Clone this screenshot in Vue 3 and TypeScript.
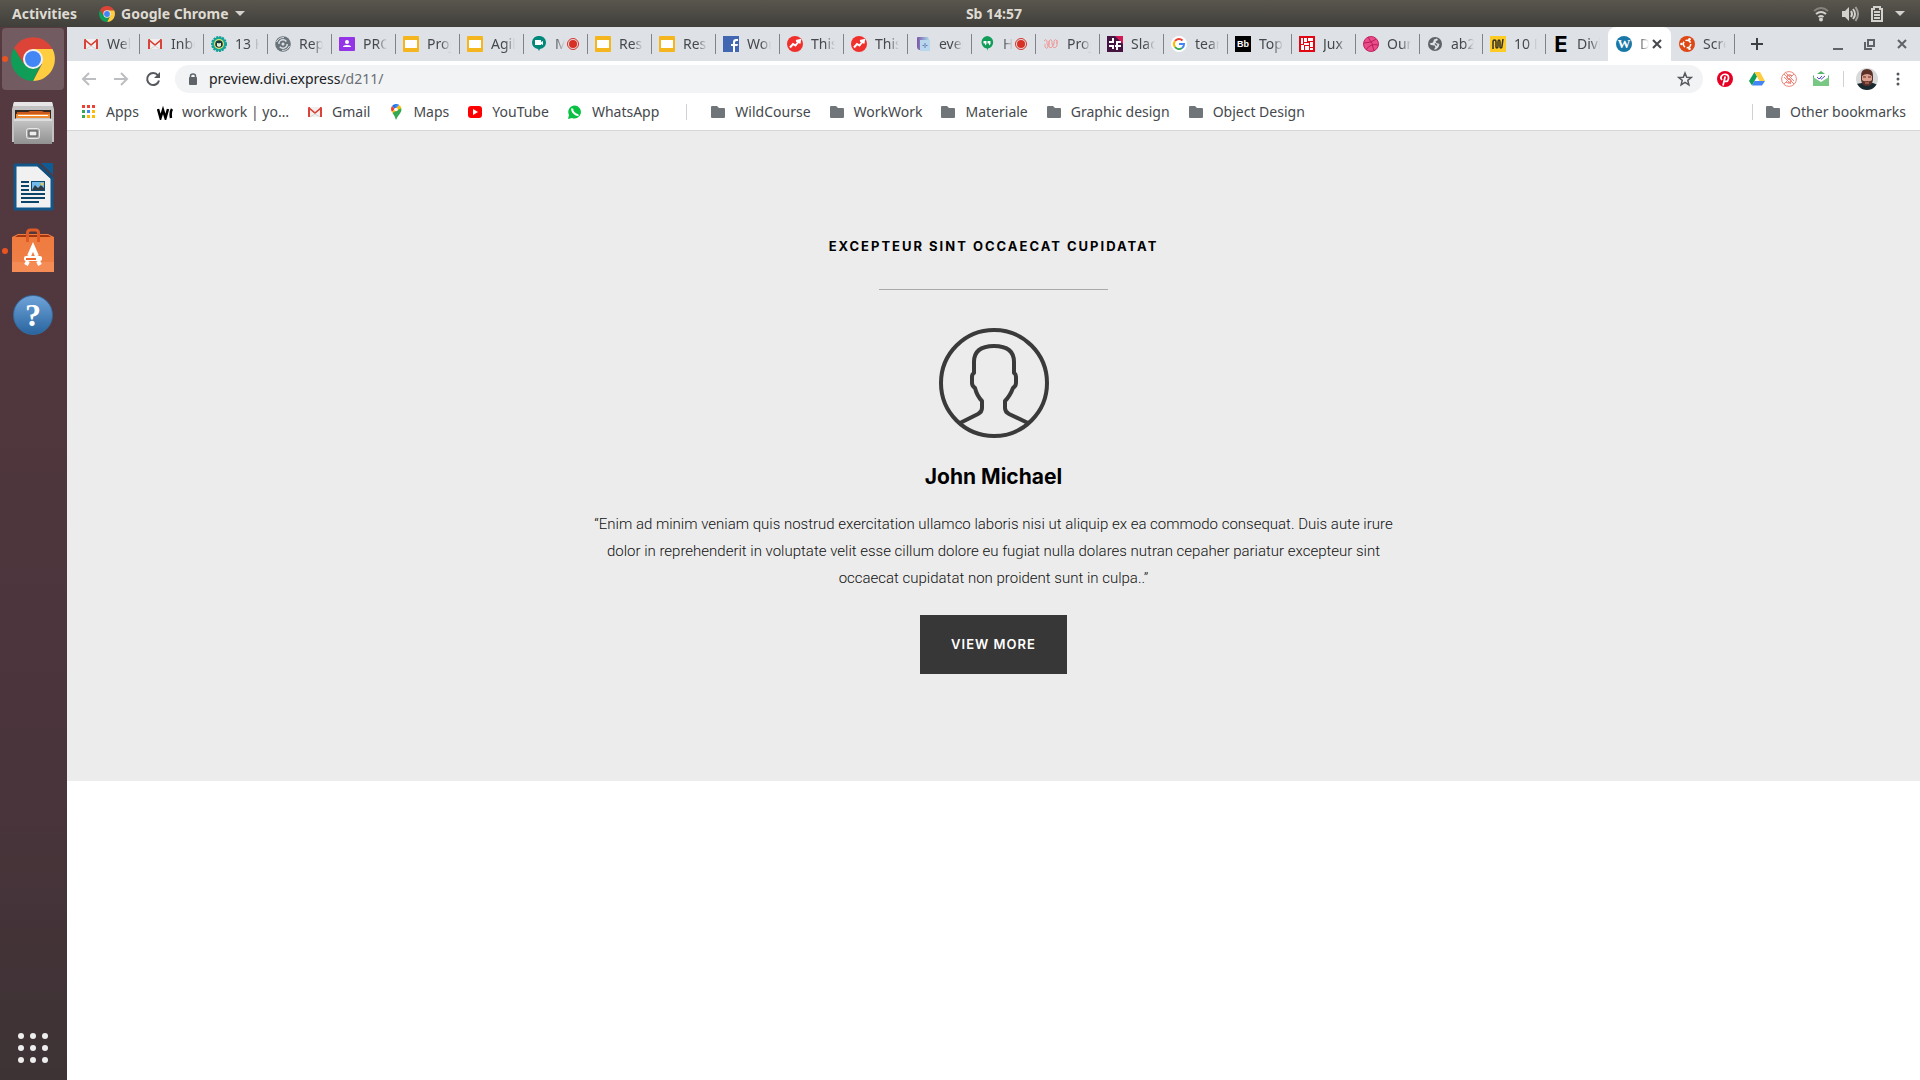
<script setup lang="ts">
interface Tab {
  icon: string
  title: string
  glyph?: string
  recording?: boolean
  active?: boolean
}

interface Bookmark {
  icon: string
  label: string
}

interface DockApp {
  icon: string
  label: string
  glyph?: string
  running?: boolean
  focused?: boolean
}

const tabs: Tab[] = [
  { icon: 'gmail', title: 'Welc' },
  { icon: 'gmail', title: 'Inbo' },
  { icon: 'badge', title: '13 K' },
  { icon: 'swirl', title: 'Rep' },
  { icon: 'classroom', title: 'PRO' },
  { icon: 'slides', title: 'Proj' },
  { icon: 'slides', title: 'Agil' },
  { icon: 'meet', title: 'M', recording: true },
  { icon: 'slides', title: 'Res' },
  { icon: 'slides', title: 'Res' },
  { icon: 'facebook', title: 'Wor' },
  { icon: 'trend', title: 'This' },
  { icon: 'trend', title: 'This' },
  { icon: 'event', title: 'ever' },
  { icon: 'hangouts', title: 'H', recording: true },
  { icon: 'waves', title: 'Proj' },
  { icon: 'slack', title: 'Slac' },
  { icon: 'google', title: 'tear' },
  { icon: 'bb', title: 'Top', glyph: 'Bb' },
  { icon: 'jux', title: 'Jux' },
  { icon: 'dribbble', title: 'Our' },
  { icon: 'globe', title: 'ab2' },
  { icon: 'miro', title: '10 E' },
  { icon: 'elegant', title: 'Divi', glyph: 'E' },
  { icon: 'wordpress', title: 'D', glyph: 'W', active: true },
  { icon: 'ubuntu', title: 'Scre' },
]

const bookmarks: Bookmark[] = [
  { icon: 'apps', label: 'Apps' },
  { icon: 'workwork', label: 'workwork | yo…' },
  { icon: 'gmail', label: 'Gmail' },
  { icon: 'maps', label: 'Maps' },
  { icon: 'youtube', label: 'YouTube' },
  { icon: 'whatsapp', label: 'WhatsApp' },
]

const folders: string[] = ['WildCourse', 'WorkWork', 'Materiale', 'Graphic design', 'Object Design']

const dockApps: DockApp[] = [
  { icon: 'chrome', label: 'Google Chrome', running: true, focused: true },
  { icon: 'files', label: 'Files' },
  { icon: 'writer', label: 'LibreOffice Writer' },
  { icon: 'software', label: 'Ubuntu Software', running: true },
  { icon: 'help', label: 'Help', glyph: '?' },
]

const extensions: string[] = ['pinterest', 'drive', 'stitch', 'mailtrack']
</script>

<template>
  <svg class="sprite" aria-hidden="true">
    <defs>
      <linearGradient id="metal" x1="0" y1="0" x2="0" y2="1">
        <stop offset="0" stop-color="#c8c8c8" /><stop offset="1" stop-color="#919191" />
      </linearGradient>
      <linearGradient id="orange" x1="0" y1="0" x2="0" y2="1">
        <stop offset="0" stop-color="#ef7a3d" /><stop offset="1" stop-color="#f0824a" />
      </linearGradient>
      <linearGradient id="eventfill" x1="0" y1="0" x2="1" y2="0">
        <stop offset="0" stop-color="#7a56a8" /><stop offset="1" stop-color="#a8dcea" />
      </linearGradient>
    </defs>
    <symbol id="chrome" viewBox="0 0 44 44">
      <path d="M22 12H41.500A22 22 0 0 1 22 44L31 27z" fill="#ffcd40" />
      <path d="M3 11 13 27 22 32 30 27 22 44A22 22 0 0 1 3 11z" fill="#0f9d58" />
      <path d="M22 12H41.500A22 22 0 0 0 3 11L12.500 26z" fill="#db4437" />
      <circle cx="22" cy="22" r="10" fill="#f1f1f1" /><circle cx="22" cy="22" r="8" fill="#4285f4" />
    </symbol>
    <symbol id="files" viewBox="0 0 44 44">
      <path d="M3 1H41L43 8V41H1V8z" fill="#c2c2c2" /><path d="M3 1H41L42 5H2z" fill="#e6e6e6" />
      <path d="M4 9H40V19H4z" fill="#302722" />
      <path d="M6 11H17L19 10H31L33 11H39V19H5z" fill="#c9591c" />
      <path d="M5 13H39V19H5z" fill="#f08c34" /><path d="M7 14H37V15H7z" fill="#fff" />
      <path d="M5 17H39L41 19V43H3V19z" fill="url(#metal)" />
      <path d="M3 18H41V20H3z" fill="#dedede" />
      <rect x="15.500" y="27.500" width="13" height="10" rx="2" fill="#aaa" stroke="#e8e8e8" />
      <rect x="18" y="30" width="8" height="5" fill="#eee" stroke="#444" />
    </symbol>
    <symbol id="writer" viewBox="0 0 44 48">
      <path d="M4 2H27L41 15V46H4z" fill="#f1f1f1" stroke="#13578a" stroke-width="3" stroke-linejoin="round" />
      <path d="M30 0H41Q42 0 42 1V12z" fill="#0d5c96" /><path d="m27 2 14 13" stroke="#134f7d" stroke-width="3" />
      <path d="M10 19H18M10 23H18M10 27H18M10 31H34M10 35H34M10 39H28" stroke="#0a4468" stroke-width="2" />
      <rect x="20" y="18" width="14" height="10" fill="#0c4c76" /><rect x="21" y="19" width="12" height="8" fill="#72bbec" />
      <path d="m21 27 3-5 3 3 3-3 3 3v2z" fill="#303c42" /><circle cx="31" cy="21" r="1.500" fill="#edc73e" />
    </symbol>
    <symbol id="software" viewBox="0 0 44 44">
      <path d="M1 8 7 5H37L43 8V43H1z" fill="url(#orange)" /><path d="M4 8 7 6H37L40 8z" fill="#a43511" />
      <path d="M1 33H43V43H1z" fill="#f58c55" />
      <path d="M16.500 13V4q0-3 3-3h5q3 0 3 3v9" fill="none" stroke="#de5b26" stroke-width="3" />
      <path d="m15 36 2-4M29 36l-2-4M18 27l4-9 4 9" fill="none" stroke="#fff" stroke-width="4" />
      <rect x="13" y="27" width="18" height="5" rx="2" fill="#fff" /><path d="M15 29H25V31H15z" fill="#ee6a2c" />
    </symbol>
    <symbol id="gmail" viewBox="0 0 16 16">
      <path d="M2 3H14V13H2z" fill="#f1efef" /><path d="M2 3 8 8 14 3V5L8 10 2 5z" fill="#d93f33" />
      <path d="M1 13V4q0-1 1-1h1V13zM13 13V3h1q1 0 1 1V13z" fill="#d8443a" /><path d="M8 10 3 13M8 10l5 3" stroke="#d8d4d4" />
    </symbol>
    <symbol id="badge" viewBox="0 0 16 16">
      <circle cx="8" cy="8" r="7" fill="#17a99e" stroke="#159e93" stroke-width="2" stroke-dasharray="2 1" />
      <circle cx="8" cy="8" r="5" fill="#e1e36d" /><circle cx="8" cy="8" r="3.800" fill="#14383c" /><path d="M6 7h1.500l.5 1 .5-1H10v3l-2 1-2-1z" fill="#e8ecd0" />
    </symbol>
    <symbol id="swirl" viewBox="0 0 16 16">
      <circle cx="8" cy="8" r="7.800" fill="#68747a" />
      <circle cx="8" cy="8" r="4.200" fill="none" stroke="#dee1e6" stroke-width="1.500" stroke-dasharray="10 3" />
      <circle cx="8" cy="8" r="1.500" fill="#dee1e6" /><path d="M1.500 6Q4 1 9 1.700M14.500 10Q12 15 7 14.300" fill="none" stroke="#dee1e6" />
    </symbol>
    <symbol id="classroom" viewBox="0 0 16 16">
      <rect y="1" width="16" height="14" rx="1" fill="#9334e6" /><circle cx="8" cy="6" r="2" fill="#fff" /><path d="M4 11q0-2 4-2t4 2z" fill="#fff" />
    </symbol>
    <symbol id="slides" viewBox="0 0 16 16"><rect width="16" height="16" rx="1" fill="#f5b51d" /><path d="M2 4H14V12H2z" fill="#fff" /></symbol>
    <symbol id="meet" viewBox="0 0 16 16">
      <path d="M8 0a6.500 6.500 0 0 1 1 13l-1 2-1-2A6.500 6.500 0 0 1 8 0" fill="#00897b" /><path d="M4 4H10V6L12 5V9L10 8V9H4z" fill="#fff" />
    </symbol>
    <symbol id="facebook" viewBox="0 0 16 16">
      <rect width="16" height="16" fill="#4267b2" /><path d="M10 16V10H8V8H10V6q0-3 3-3h2V5H13.500Q12 5 12 6.500V8H15L14.500 10H12V16z" fill="#fff" />
    </symbol>
    <symbol id="trend" viewBox="0 0 16 16">
      <circle cx="8" cy="8" r="8" fill="#f0302c" /><path d="M3 11.500 6 8 8.500 9.500 12 5M9 5 13 4 12.500 7.500" fill="none" stroke="#fff" stroke-width="2" />
    </symbol>
    <symbol id="event" viewBox="0 0 16 16">
      <path d="M2 2q0-1 1-1H13l1 2V14H4q-2-1-2-3z" fill="url(#eventfill)" /><path d="M5 4H15V15H5z" fill="#b8d7ec" />
      <path d="M10 7v5M7.500 9.500h5" stroke="#6878b5" stroke-dasharray="2 1" />
    </symbol>
    <symbol id="hangouts" viewBox="0 0 16 16">
      <path d="M8 0a6.300 6.300 0 0 1 1 12.500L8 15V12.500A6.300 6.300 0 0 1 8 0" fill="#109d58" /><path d="M4.500 5h3v3L6 9.500V7.500H4.500zM8.500 5h3v3L10 9.500V7.500H8.500z" fill="#fff" />
    </symbol>
    <symbol id="waves" viewBox="0 0 16 16">
      <path d="M1 5q2-3 3 0v3q1 3 2 0V5q2-3 3 0v3q1 3 2 0V5q2-3 3 0v3M2 8v3q2 3 3 0V8M6 5v6q2 2 4-1V7M10 11q2 2 4-1V4" fill="none" stroke="#ee9b9a" />
    </symbol>
    <symbol id="slack" viewBox="0 0 16 16">
      <path d="M0 0H16V16H0z" fill="#451440" /><path d="M8 0H16V8z" fill="#d31a56" />
      <path d="M6 2v4M10 5v4M6 9v4M10 10v4M2 6h5M9 6h5M2 10h5M8 10h6" stroke="#fff" stroke-width="2" />
    </symbol>
    <symbol id="google" viewBox="0 0 16 16">
      <circle cx="8" cy="8" r="8" fill="#fff" />
      <path d="M4 5A5 5 0 0 1 11.500 4.500" fill="none" stroke="#ea4335" stroke-width="2" /><path d="M4 5A5 5 0 0 0 4 11" fill="none" stroke="#fbbc05" stroke-width="2" />
      <path d="M4 11A5 5 0 0 0 11 12" fill="none" stroke="#34a853" stroke-width="2" /><path d="M8 8H13Q13 11 11 12" fill="none" stroke="#4285f4" stroke-width="2" />
    </symbol>
    <symbol id="jux" viewBox="0 0 16 16">
      <path d="M0 0H16V16H0z" fill="#e30613" /><path d="M2 2H4V8H2zM5 2H8V6H5zM9 2h5v3H9zM5 7h5v2H5zM11 6h3v5h-3zM2 9h3v5H2zM6 10h4v4H6zM11 12h3v2h-3z" fill="#fff" />
    </symbol>
    <symbol id="dribbble" viewBox="0 0 16 16">
      <circle cx="8" cy="8" r="7.500" fill="#ea4c89" stroke="#c32361" /><path d="M5 1q5 6 6 14M1 7q8 0 12-4M3 14q4-7 12-5" fill="none" stroke="#b91e58" />
    </symbol>
    <symbol id="globe" viewBox="0 0 16 16">
      <circle cx="8" cy="8" r="7" fill="#5f6368" />
      <path d="M2.500 7.500 6 6.500 7 3.500 10 2.500 11 4 8.500 5.500 9.500 7 12.500 8 11.500 11 9 13.500 7 13.500 8.500 11 7.500 9.500 4 9z" fill="#dee1e6" />
      <path d="m8 7.500 2 2" stroke="#5f6368" stroke-width="1.500" />
    </symbol>
    <symbol id="miro" viewBox="0 0 16 16">
      <path d="M0 0H16V16H0z" fill="#fccb24" /><path d="M3 13V6q0-2 1.500-2T6 6v5q0 1 1 1t1-2V6q0-2 1-2t1 2v5q0 1 1 1t1-2l1-7" fill="none" stroke="#332f2a" stroke-width="1.500" />
    </symbol>
    <symbol id="ubuntu" viewBox="0 0 16 16">
      <circle cx="8" cy="8" r="8" fill="#dd4814" /><circle cx="8" cy="8" r="3.700" fill="none" stroke="#fff" stroke-width="1.600" stroke-dasharray="6 1.700" />
      <circle cx="2.500" cy="8" r="1.300" fill="#fff" /><circle cx="10.500" cy="3.200" r="1.300" fill="#fff" /><circle cx="10.500" cy="12.800" r="1.300" fill="#fff" />
    </symbol>
    <symbol id="apps" viewBox="0 0 16 16">
      <path d="M1 1h3v3H1zM6 1h3v3H6zM11 1h3v3h-3z" fill="#ea4335" /><path d="M1 6h3v3H1z" fill="#34a853" /><path d="M6 6h3v3H6z" fill="#4285f4" /><path d="M11 6h3v3h-3zM11 11h3v3h-3zM6 11h3v3H6z" fill="#fbbc05" /><path d="M1 11h3v3H1z" fill="#34a853" />
    </symbol>
    <symbol id="workwork" viewBox="0 0 16 16"><path d="m1 5 2.500 9L6 6l2.500 8L11 5M15 5q-2 3-1 9" fill="none" stroke="#000" stroke-width="2.500" /></symbol>
    <symbol id="maps" viewBox="0 0 16 16">
      <path d="M8 0a5.500 5.500 0 0 0-4 2l3 3 4-4.200A6 6 0 0 0 8 0" fill="#1a73e8" /><path d="M4 2Q2 5 4 8l3-3z" fill="#ea4335" /><path d="M11 1 4 8l3 3 6.300-7Q12.500 2 11 1" fill="#fbbc04" /><path d="M13.300 4Q14 7 12 9.500 9 13 8 16 7 12 4.500 9L8 7q2 0 2-1z" fill="#34a853" /><path d="M7 1 11 1 8 4z" fill="#4285f4" /><circle cx="8" cy="5.500" r="1.800" fill="#fff" />
    </symbol>
    <symbol id="youtube" viewBox="0 0 16 16"><rect x="1" y="2" width="14" height="12" rx="3" fill="#f00" /><path d="m6 5 5 3-5 3z" fill="#fff" /></symbol>
    <symbol id="whatsapp" viewBox="0 0 16 16">
      <path d="M8 1.500A6.500 6.500 0 1 1 5 14L1 15 2 11A6.500 6.500 0 0 1 8 1.500" fill="#08c143" /><path d="M5.500 4.500q-1 2 1.500 4.500t4.500 2" fill="none" stroke="#fff" stroke-width="2" />
    </symbol>
    <symbol id="folder" viewBox="0 0 16 16"><path d="M1 3q0-1 1-1h5l2 2h5q1 0 1 1v8q0 1-1 1H2q-1 0-1-1z" fill="#70757a" /></symbol>
    <symbol id="pinterest" viewBox="0 0 16 16">
      <circle cx="8" cy="8" r="8" fill="#e60023" /><path d="M5 9Q3 7 4.500 5 6 3 8.500 3.300 12 3.800 11.500 7.500 11 10.500 9 10.500 7.800 10.500 7.500 9.500M8.200 5.500 6 14.500" fill="none" stroke="#fff" stroke-width="1.700" />
    </symbol>
    <symbol id="drive" viewBox="0 0 16 16">
      <path d="M5.500 1 8 5.500 3 14.500 0 10z" fill="#0f9d58" /><path d="M5.500 1H11l5 9h-5.500z" fill="#ffcd40" /><path d="M5.500 10H16l-3 4.500H3z" fill="#4285f4" />
    </symbol>
    <symbol id="stitch" viewBox="0 0 16 16">
      <circle cx="8" cy="8" r="7.400" fill="none" stroke="#f1867b" /><path d="m3 3 10 10M5 2l8 8M3 6l7 7M3 13 13 3" stroke="#f1867b" /><path d="M11 5Q8 3 6.500 5T8 8t1.500 3-4.500 0" fill="none" stroke="#f1867b" stroke-width="1.500" />
    </symbol>
    <symbol id="mailtrack" viewBox="0 0 16 16">
      <path d="m4 3 4-3 4 3z" fill="#55b46a" /><path d="m0 5 2-2h12l2 2v10H0z" fill="#55b46a" /><path d="M1 3h14v8H1z" fill="#fff" /><path d="m0 6 8 5 8-5v9H0z" fill="#79c784" /><path d="m4 6 2 2 3-3M7.500 7.500 8.500 8 12 5" fill="none" stroke="#554fc4" />
    </symbol>
  </svg>

  <div class="desktop">
    <header class="topbar">
      <div class="topbar-left">
        <button type="button">Activities</button>
        <button type="button" class="app-menu">
          <svg class="ic"><use href="#chrome" /></svg>Google Chrome<span class="caret"></span>
        </button>
      </div>
      <time class="clock">Sb 14:57</time>
      <div class="status">
        <svg width="16" height="16" viewBox="0 0 16 16" fill="none" stroke="#d3d2ce" stroke-width="2">
          <path d="M1 5Q8-1 15 5" opacity=".4" /><path d="M3 8q5-4 10 0M5.500 11q2.500-2 5 0" /><circle cx="8" cy="13.500" r="1" />
        </svg>
        <svg width="18" height="16" viewBox="0 0 18 16" fill="none" stroke="#d3d2ce" stroke-width="2">
          <path d="M1 5h3l4-4v14l-4-4H1z" fill="#d3d2ce" stroke="none" /><path d="M10 5q2 3 0 6M12 3q4 5 0 10" /><path d="M14.500 1q5 7 0 14" opacity=".6" />
        </svg>
        <svg width="12" height="16" viewBox="0 0 12 16" fill="none" stroke="#d3d2ce" stroke-width="2">
          <path d="M1 3h2V1h6v2h2v12H1zM3 6h6M3 9h6M3 12h6" />
        </svg>
        <span class="caret"></span>
      </div>
    </header>

    <div class="workspace">
      <nav class="dock" aria-label="Dock">
        <button v-for="app in dockApps" :key="app.icon" type="button" :aria-label="app.label" :class="{ running: app.running }">
          <span class="tile" :class="{ focused: app.focused }">
            <span v-if="app.glyph" class="help">{{ app.glyph }}</span>
            <svg v-else><use :href="'#' + app.icon" /></svg>
          </span>
        </button>
        <button type="button" class="show-apps" aria-label="Show Applications">
          <i v-for="n in 9" :key="n"></i>
        </button>
      </nav>

      <div class="browser">
        <div class="tabstrip">
          <div class="tabs" role="tablist">
            <div v-for="(tab, i) in tabs" :key="i" class="tab" :class="{ active: tab.active, before: tabs[i + 1]?.active }" role="tab">
              <span v-if="tab.glyph" class="glyph" :class="tab.icon">{{ tab.glyph }}</span>
              <svg v-else class="ic"><use :href="'#' + tab.icon" /></svg>
              <span class="title">{{ tab.title }}</span>
              <svg v-if="tab.recording" class="mark" viewBox="0 0 12 12"><circle cx="6" cy="6" r="5.500" fill="none" stroke="#d93025" /><circle cx="6" cy="6" r="4" fill="#d93025" /></svg>
              <button v-if="tab.active" type="button" class="mark" aria-label="Close tab">
                <svg width="12" height="12"><path d="m2 2 8 8M10 2l-8 8" stroke="#44474b" stroke-width="2" /></svg>
              </button>
            </div>
          </div>
          <button type="button" class="new-tab" aria-label="New tab">
            <svg width="12" height="12"><path d="M6 0v12M0 6h12" stroke="#3c4043" stroke-width="2" /></svg>
          </button>
          <div class="window-buttons">
            <button type="button" aria-label="Minimize"><svg width="12" height="12"><path d="M1 11h10" stroke="#5f6368" stroke-width="2" /></svg></button>
            <button type="button" aria-label="Restore"><svg width="12" height="12" fill="none" stroke="#5f6368" stroke-width="2"><path d="M4 2h6v6H4z" /><path d="M1 4v7h7" /></svg></button>
            <button type="button" aria-label="Close"><svg width="12" height="12"><path d="m2 2 8 8M10 2l-8 8" stroke="#5f6368" stroke-width="2" /></svg></button>
          </div>
        </div>

        <div class="toolbar">
          <button type="button" aria-label="Back"><svg class="ic" fill="none" stroke="#bcbec1" stroke-width="2"><path d="M15 8H2M8 2 2 8l6 6" /></svg></button>
          <button type="button" aria-label="Forward"><svg class="ic" fill="none" stroke="#bcbec1" stroke-width="2"><path d="M1 8h13M8 2l6 6-6 6" /></svg></button>
          <button type="button" aria-label="Reload"><svg class="ic"><path d="M13 4.500A6 6 0 1 0 14 9.500" fill="none" stroke="#55595e" stroke-width="2" /><path d="M15 1v6H9z" fill="#55595e" /></svg></button>
          <div class="omnibox">
            <svg width="10" height="12" viewBox="0 0 10 12"><rect x="1" y="4" width="8" height="8" rx="1" fill="#5f6368" /><path d="M2.500 5V3a2.500 2 0 0 1 5 0v2" fill="none" stroke="#5f6368" stroke-width="1.500" /></svg>
            <a class="url" href="#">preview.divi.express<span>/d211/</span></a>
            <button type="button" aria-label="Bookmark this tab"><svg class="ic"><path d="m8 2 1.700 4.200 4.600.3-3.500 2.900 1.100 4.400L8 11.400l-3.900 2.400 1.100-4.400L1.700 6.500l4.600-.3z" fill="none" stroke="#55595e" stroke-width="1.500" /></svg></button>
          </div>
          <button v-for="ext in extensions" :key="ext" type="button" :aria-label="ext"><svg class="ic"><use :href="'#' + ext" /></svg></button>
          <div class="account">
            <span class="rule"></span>
            <button type="button" aria-label="Profile">
              <svg width="22" height="22" viewBox="0 0 22 22">
                <defs><clipPath id="round"><circle cx="11" cy="11" r="11" /></clipPath></defs>
                <g clip-path="url(#round)"><path d="M0 0H22V22H0z" fill="#d7d9da" /><path d="M0 16 6 15H17L22 17V22H0z" fill="#182a30" /><path d="M5 8Q5 1 11 1T17 8V12Q16 18 11 18T5 12z" fill="#5b3029" /><path d="M6 8Q11 4 16 8V12Q14 14 11 13 8 14 6 12z" fill="#dc9f8d" /><path d="M7 9h3M12 9h3" stroke="#5b3029" /><path d="M9 15h4" stroke="#d98a80" /></g>
              </svg>
            </button>
            <button type="button" aria-label="Menu"><svg class="ic" fill="#55595e"><circle cx="8" cy="3" r="1.500" /><circle cx="8" cy="8" r="1.500" /><circle cx="8" cy="13" r="1.500" /></svg></button>
          </div>
        </div>

        <nav class="bookmarks" aria-label="Bookmarks">
          <a v-for="b in bookmarks" :key="b.label" href="#"><svg class="ic"><use :href="'#' + b.icon" /></svg>{{ b.label }}</a>
          <span class="rule divider"></span>
          <a v-for="f in folders" :key="f" href="#"><svg class="ic"><use href="#folder" /></svg>{{ f }}</a>
          <div class="other">
            <span class="rule"></span>
            <a href="#"><svg class="ic"><use href="#folder" /></svg>Other bookmarks</a>
          </div>
        </nav>

        <main class="page">
          <section class="testimonial">
            <h2>Excepteur sint occaecat cupidatat</h2>
            <hr />
            <svg class="portrait" viewBox="0 0 110 110" fill="none" stroke="#3a3a3a" stroke-width="4">
              <circle cx="55" cy="55" r="53" />
              <path d="M21 95 39 86Q43 84 43 80V73Q38 68 36 60 33 58 33 55V49Q33 46 35 45V34Q35 18 55 18T75 34V45Q77 46 77 49V55Q77 58 74 60 71 68 66 73V80Q66 84 70 86L89 95" stroke-linejoin="round" />
            </svg>
            <h3>John Michael</h3>
            <p>“Enim ad minim veniam quis nostrud exercitation ullamco laboris nisi ut aliquip ex ea commodo consequat. Duis aute irure dolor in reprehenderit in voluptate velit esse cillum dolore eu fugiat nulla dolares nutran cepaher pariatur excepteur sint occaecat cupidatat non proident sunt in culpa..”</p>
            <a class="more" href="#">View more</a>
          </section>
        </main>
      </div>
    </div>
  </div>
</template>

<style>
body {
  margin: 0;
  background: #fff;
}
</style>

<style scoped>
.desktop {
  display: flex;
  flex-direction: column;
  min-height: 100vh;
  font-family: "Noto Sans", "Open Sans", sans-serif;
  font-size: 14px;
}
.sprite {
  position: absolute;
  width: 0;
  height: 0;
}
button {
  display: flex;
  align-items: center;
  justify-content: center;
  padding: 0;
  border: 0;
  background: none;
  color: inherit;
  font: inherit;
}
svg {
  display: block;
  flex: none;
}
.ic {
  width: 16px;
  height: 16px;
}
.topbar {
  display: grid;
  grid-template-columns: 68px 1fr auto 1fr;
  align-items: center;
  height: 27px;
  background: linear-gradient(#59564e, #403f3a);
  color: #dfdbd2;
  font-weight: 700;
  line-height: 18px;
}
.topbar-left {
  grid-column: 1 / 3;
  display: flex;
  gap: 22px;
  padding-left: 12px;
}
.app-menu {
  gap: 6px;
}
.caret {
  border: 5px solid transparent;
  border-top-color: #d3d2ce;
  border-bottom: 0;
}
.status {
  display: flex;
  align-items: center;
  justify-content: flex-end;
  gap: 12px;
  padding-right: 15px;
}
.workspace {
  display: flex;
  flex: 1;
}
.dock {
  display: flex;
  flex-direction: column;
  flex: none;
  box-sizing: border-box;
  width: 67px;
  padding-right: 1px;
  background: linear-gradient(#553a40, #4a343b 70%, #3d3335);
}
.dock button {
  position: relative;
  height: 64px;
}
.tile {
  display: flex;
  align-items: center;
  justify-content: center;
  width: 62px;
  height: 62px;
  border-radius: 4px;
}
.tile svg {
  width: 44px;
  height: 48px;
}
.help {
  width: 38px;
  height: 38px;
  border: 1px solid #336b9f;
  border-radius: 50%;
  background: linear-gradient(#6ea3d8, #2a659f);
  color: #fff;
  font: 700 32px/38px "Liberation Serif", serif;
}
.focused {
  background: #735c61;
}
.running::before {
  content: "";
  position: absolute;
  left: 2px;
  top: 29px;
  width: 6px;
  height: 6px;
  border-radius: 50%;
  background: #e95420;
}
.dock .show-apps {
  display: grid;
  grid-template-columns: repeat(3, 6px);
  gap: 6px;
  height: 64px;
  margin-top: auto;
  align-content: center;
}
.show-apps i {
  width: 6px;
  height: 6px;
  border-radius: 50%;
  background: #eee;
}
.browser {
  display: flex;
  flex-direction: column;
  flex: 1;
  min-width: 0;
}
.tabstrip {
  display: flex;
  height: 34px;
  padding-left: 8px;
  background: #dee1e6;
  color: #45494d;
}
.tabs {
  display: flex;
  min-width: 0;
}
.tab {
  position: relative;
  display: flex;
  align-items: center;
  flex: 0 1 auto;
  width: 64px;
  min-width: 0;
  box-sizing: border-box;
  padding: 0 8px;
}
.tab:nth-child(n + 22) {
  width: 63px;
}
.tab:not(.active, .before)::after {
  content: "";
  position: absolute;
  right: -1px;
  top: 7px;
  width: 1px;
  height: 20px;
  background: #808387;
}
.title {
  flex: 1;
  min-width: 0;
  margin-left: 8px;
  overflow: hidden;
  line-height: 20px;
  white-space: nowrap;
  mask-image: linear-gradient(to left, transparent, #000 10px);
}
.glyph {
  flex: none;
  width: 16px;
  height: 16px;
  overflow: hidden;
  text-align: center;
}
.bb {
  background: #000;
  color: #fff;
  font: 700 9px/16px "Liberation Sans", sans-serif;
}
.elegant {
  color: #000;
  font: 700 22px/16px Inter, sans-serif;
}
.wordpress {
  border-radius: 50%;
  background: #1a78a8;
  color: #fff;
  font: 700 13px/16px "Liberation Serif", serif;
}
.mark {
  flex: none;
  width: 12px;
  height: 12px;
  margin-left: 2px;
}
.active {
  border-radius: 8px 8px 0 0;
  background: #fff;
}
.new-tab {
  width: 46px;
}
.window-buttons {
  display: flex;
  gap: 20px;
  margin-left: auto;
  padding-right: 12px;
}
.toolbar {
  display: flex;
  align-items: center;
  gap: 16px;
  height: 36px;
  padding: 0 14px;
}
.omnibox {
  display: flex;
  align-items: center;
  flex: 1;
  box-sizing: border-box;
  height: 28px;
  margin: 0 -2px;
  padding: 0 10px 0 13px;
  border-radius: 14px;
  background: #f1f3f4;
}
.url {
  flex: 1;
  margin-left: 11px;
  color: #202124;
  line-height: 18px;
  text-decoration: none;
}
.url span {
  color: #6b6f74;
}
.rule {
  width: 1px;
  height: 16px;
  background: #cfd1d4;
}
.account,
.other {
  display: flex;
  align-items: center;
  gap: 12px;
}
.account {
  margin-left: -2px;
}
.bookmarks {
  display: flex;
  align-items: center;
  gap: 18px;
  height: 34px;
  box-sizing: border-box;
  padding: 0 14px 4px;
  border-bottom: 1px solid #d5d7d9;
}
.bookmarks a {
  display: flex;
  align-items: center;
  gap: 9px;
  color: #45494d;
  text-decoration: none;
  white-space: nowrap;
}
.divider {
  margin: 0 5px 0 9px;
}
.other {
  margin-left: auto;
}
.page {
  flex: 1;
  background: #fff;
}
.testimonial {
  display: flex;
  flex-direction: column;
  align-items: center;
  padding: 100px 20px 107px;
  background: #ececec;
  text-align: center;
}
h2 {
  margin: 0;
  color: #000;
  font: 700 13px/30px Inter, sans-serif;
  letter-spacing: 2px;
  text-transform: uppercase;
}
hr {
  width: 229px;
  height: 1px;
  margin: 28px 0 38px;
  border: 0;
  background: #aaa;
}
.portrait {
  width: 110px;
  height: 110px;
}
h3 {
  margin: 26px 0 21px;
  color: #000;
  font: 700 21px/26px Inter, sans-serif;
}
p {
  max-width: 800px;
  margin: 0 0 23px;
  color: #111;
  font: 300 15px/27px Roboto, sans-serif;
}
.more {
  padding: 0 31px;
  background: #373737;
  color: #fff;
  font: 600 13px/59px Inter, sans-serif;
  letter-spacing: 1px;
  text-decoration: none;
  text-transform: uppercase;
}
</style>
